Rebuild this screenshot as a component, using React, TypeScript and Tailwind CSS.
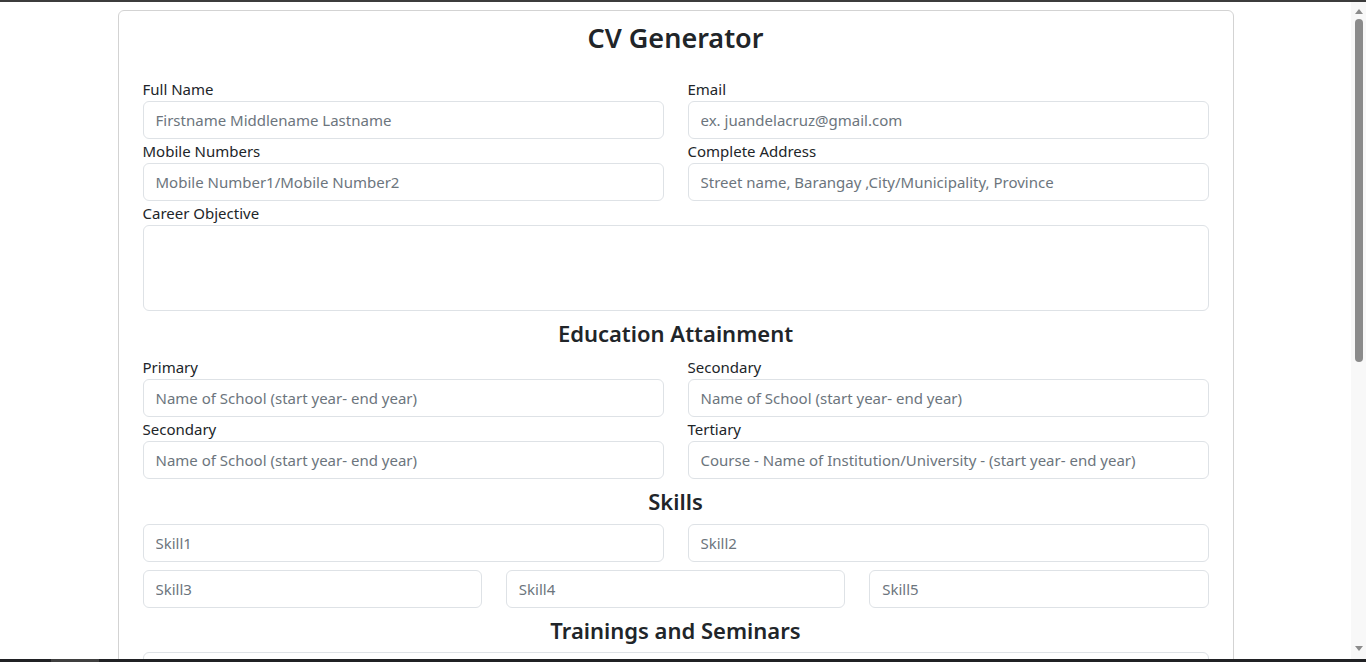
const font = { fontFamily: '"Noto Sans", "Open Sans", Arial, sans-serif' };

function Field({ label, placeholder }: { label?: string; placeholder: string }) {
  return (
    <div>
      {label && <label className="block text-[15px] leading-6 text-[#212529]">{label}</label>}
      <input
        className="block h-[38px] w-full rounded-md border border-[#dee2e6] bg-white px-3 text-[15px] text-[#212529] outline-none placeholder:text-[#6c757d]"
        placeholder={placeholder}
      />
    </div>
  );
}

function SectionTitle({ children }: { children: string }) {
  return <h4 className="my-2 text-center text-[22px] leading-[28.4px] font-semibold text-[#212529]">{children}</h4>;
}

function Scrollbar() {
  return (
    <div className="flex w-[15px] shrink-0 flex-col items-center bg-[#f8f8f8]">
      <div className="mt-[7px] h-0 w-0 border-x-[4px] border-b-[5px] border-x-transparent border-b-[#8c8c8c]" />
      <div className="mt-[5px] h-[343px] w-[8px] rounded-full bg-[#8b8b8b]" />
      <div className="flex-1" />
      <div className="mb-[8px] h-0 w-0 border-x-[4px] border-t-[5px] border-x-transparent border-t-[#8c8c8c]" />
    </div>
  );
}

export default function App() {
  return (
    <div className="flex h-[662px] flex-col overflow-hidden bg-white" style={font}>
      <div className="h-[2px] shrink-0 bg-[#3c3c3c]" />
      <div className="flex min-h-0 flex-1">
        <main className="min-w-0 flex-1 overflow-hidden">
          <div className="mx-auto mt-[8px] w-[1116px] rounded-md border border-[#d3d3d3] px-6 pt-[8px] pb-6">
            <h2 className="mb-[20px] text-center text-[27px] leading-[38px] font-semibold text-[#212529]">CV Generator</h2>

            <div className="grid grid-cols-2 gap-x-6">
              <Field label="Full Name" placeholder="Firstname Middlename Lastname" />
              <Field label="Email" placeholder="ex. juandelacruz@gmail.com" />
              <Field label="Mobile Numbers" placeholder="Mobile Number1/Mobile Number2" />
              <Field label="Complete Address" placeholder="Street name, Barangay ,City/Municipality, Province" />
            </div>
            <label className="block text-[15px] leading-6 text-[#212529]">Career Objective</label>
            <textarea className="block h-[86px] w-full resize-none rounded-md border border-[#dee2e6] px-3 py-1.5 text-[15px] outline-none" />

            <SectionTitle>Education Attainment</SectionTitle>
            <div className="grid grid-cols-2 gap-x-6">
              <Field label="Primary" placeholder="Name of School (start year- end year)" />
              <Field label="Secondary" placeholder="Name of School (start year- end year)" />
              <Field label="Secondary" placeholder="Name of School (start year- end year)" />
              <Field label="Tertiary" placeholder="Course - Name of Institution/University - (start year- end year)" />
            </div>

            <SectionTitle>Skills</SectionTitle>
            <div className="grid grid-cols-2 gap-x-6">
              <Field placeholder="Skill1" />
              <Field placeholder="Skill2" />
            </div>
            <div className="mt-2 grid grid-cols-3 gap-x-6">
              <Field placeholder="Skill3" />
              <Field placeholder="Skill4" />
              <Field placeholder="Skill5" />
            </div>

            <SectionTitle>Trainings and Seminars</SectionTitle>
            <div className="grid gap-2">
              <Field placeholder="Title of Training/Seminar - Venue - (Date)" />
              <Field placeholder="Title of Training/Seminar - Venue - (Date)" />
            </div>
          </div>
        </main>
        <Scrollbar />
      </div>
      <div className="flex h-[3px] shrink-0 bg-[#202124]">
        <div className="ml-[51px] w-[48px] bg-[#3f3f3f]" />
      </div>
    </div>
  );
}
